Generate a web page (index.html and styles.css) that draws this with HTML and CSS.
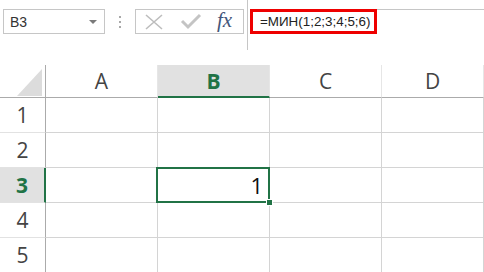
FILE: index.html
```html
<!DOCTYPE html>
<html lang="ru">
<head>
    <meta charset="UTF-8">
    <title>МИН</title>
    <link rel="stylesheet" href="styles.css">
</head>
<body>

    <div class="toolbar">
        <div class="name-box">
            <span>B3</span>
            <span class="drop"></span>
        </div>
        <div class="grip">
            <i></i><i></i><i></i>
        </div>
        <div class="fx-buttons">
            <svg width="20" height="18" viewBox="0 0 20 18">
                <path d="M2 2 L18 16 M18 2 L2 16" stroke="#bdbdbd" stroke-width="1.6" fill="none"/>
            </svg>
            <svg width="22" height="18" viewBox="0 0 22 18">
                <path d="M2 8 L8 14 L20 2" stroke="#c4c4c4" stroke-width="3" fill="none"/>
            </svg>
            <span class="fx">fx</span>
        </div>
        <div class="formula-bar">
            <div class="formula-row">
                <div class="formula-text">=МИН(1;2;3;4;5;6)</div>
                <div class="formula-rest"></div>
            </div>
        </div>
    </div>

    <div class="sheet">
        <div class="corner"><span class="tri"></span></div>
        <div class="col-head">A</div>
        <div class="col-head active">B</div>
        <div class="col-head">C</div>
        <div class="col-head">D</div>

        <div class="row-head">1</div>
        <div class="cell"></div><div class="cell"></div><div class="cell"></div><div class="cell"></div>

        <div class="row-head">2</div>
        <div class="cell"></div><div class="cell"></div><div class="cell"></div><div class="cell"></div>

        <div class="row-head active">3</div>
        <div class="cell"></div><div class="cell selected">1</div><div class="cell"></div><div class="cell"></div>

        <div class="row-head">4</div>
        <div class="cell"></div><div class="cell"></div><div class="cell"></div><div class="cell"></div>

        <div class="row-head">5</div>
        <div class="cell"></div><div class="cell"></div><div class="cell"></div><div class="cell"></div>
    </div>

</body>
</html>
```

FILE: styles.css
```css
body {
    margin: 0;
    background: #fff;
    font-family: 'Liberation Sans', Arial, sans-serif;
    color: #222;
    overflow: hidden;
}

/* строка формул */
.toolbar {
    display: flex;
    height: 50px;
}

.name-box {
    box-sizing: border-box;
    margin: 9px 0 0 3px;
    width: 102px;
    height: 25px;
    border: 1px solid #c6c6c6;
    display: flex;
    align-items: center;
    justify-content: space-between;
    padding: 0 6px 0 6px;
    font-size: 14px;
    color: #333;
}

.drop {
    width: 0;
    height: 0;
    border-left: 4px solid transparent;
    border-right: 4px solid transparent;
    border-top: 4px solid #7a7a7a;
    margin-right: 1px;
}

.grip {
    width: 30px;
    display: flex;
    flex-direction: column;
    align-items: center;
    gap: 3px;
    padding-top: 16px;
    box-sizing: border-box;
}

.grip i {
    display: block;
    width: 2px;
    height: 2px;
    background: #a8a8a8;
}

.fx-buttons {
    box-sizing: border-box;
    margin-top: 9px;
    width: 109px;
    height: 25px;
    border: 1px solid #c6c6c6;
    display: flex;
    align-items: center;
    padding-left: 8px;
    gap: 16px;
}

.fx {
    font-family: 'Liberation Serif', 'Times New Roman', serif;
    font-style: italic;
    font-size: 21px;
    color: #44567a;
    line-height: 1;
    margin-left: -1px;
    margin-top: -2px;
}

.formula-bar {
    flex: 1;
    margin-left: 3px;
    border-left: 1px solid #c6c6c6;
}

.formula-row {
    display: flex;
    margin-top: 9px;
}

.formula-text {
    box-sizing: border-box;
    margin-left: 2px;
    width: 127px;
    height: 25px;
    border: 3px solid #ee0000;
    font-size: 13.4px;
    line-height: 19px;
    padding-left: 7px;
    color: #222;
    white-space: nowrap;
}

.formula-rest {
    flex: 1;
    border-top: 1px solid #c6c6c6;
}

/* лист */
.sheet {
    margin-top: 15px;
    display: grid;
    grid-template-columns: 46px 112px 112px 112px 1fr;
    grid-template-rows: 33px repeat(5, 35px);
    font-family: 'Open Sans', Arial, sans-serif;
}

.sheet > div {
    box-sizing: border-box;
    border-right: 1px solid #d4d4d4;
    border-bottom: 1px solid #d4d4d4;
}

.corner {
    position: relative;
    border-right-color: #ababab !important;
    border-bottom-color: #ababab !important;
}

.tri {
    position: absolute;
    right: 3px;
    bottom: 1px;
    width: 0;
    height: 0;
    border-left: 25px solid transparent;
    border-bottom: 27px solid #dcdcdc;
}

.col-head,
.row-head {
    display: flex;
    align-items: center;
    justify-content: center;
    font-size: 21px;
    color: #444;
}

.col-head {
    border-right-color: #e6e6e6 !important;
    border-bottom-color: #ababab !important;
}

.row-head {
    border-right-color: #ababab !important;
    border-bottom-color: #e2e2e2 !important;
}

.col-head.active {
    background: #e1e1e1;
    color: #217346;
    font-weight: bold;
    border-bottom: 2px solid #217346 !important;
}

.row-head.active {
    background: #e1e1e1;
    color: #217346;
    font-weight: bold;
    border-right: 2px solid #217346 !important;
}

.cell {
    font-size: 22px;
    color: #111;
    display: flex;
    align-items: center;
    justify-content: flex-end;
    padding-right: 6px;
}

.selected {
    position: relative;
}

.selected::before {
    content: "";
    position: absolute;
    left: -2px;
    top: -1px;
    right: -1px;
    bottom: -1px;
    border: 2px solid #217346;
}

.selected::after {
    content: "";
    position: absolute;
    right: -4px;
    bottom: -4px;
    width: 5px;
    height: 5px;
    background: #217346;
    border: 1px solid #fff;
}
```
